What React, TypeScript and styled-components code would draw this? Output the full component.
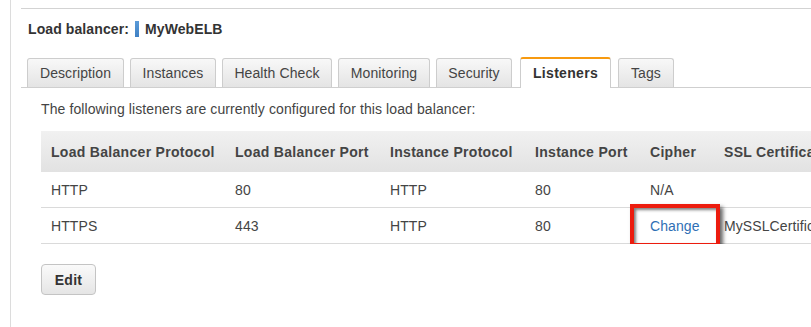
import styled, { createGlobalStyle } from 'styled-components';

const GlobalStyle = createGlobalStyle`
  html, body {
    margin: 0;
    padding: 0;
    background: #fff;
  }
  body {
    font-family: 'Liberation Sans', Arial, sans-serif;
    font-size: 14px;
    letter-spacing: 0.1px;
    color: #444;
  }
`;

const Page = styled.div`
  height: 327px;
  padding-left: 10px;
  overflow: hidden;
`;

const Panel = styled.div`
  height: 100%;
  border-left: 1px solid #dcdcdc;
  padding: 8px 0 0 10px;
  box-sizing: border-box;
`;

const Content = styled.div`
  border-top: 1px solid #d3d3d3;
  padding-top: 12px;
`;

const Heading = styled.h2`
  display: flex;
  align-items: center;
  gap: 6px;
  margin: 0 0 20px 7px;
  font-size: 14px;
  line-height: 16px;
  font-weight: bold;
  letter-spacing: 0.1px;
  color: #333;
`;

const NameMark = styled.span`
  width: 4px;
  height: 16px;
  background: linear-gradient(180deg, #5b9bd8 0%, #3f80c4 100%);
`;

const TabStrip = styled.div`
  display: flex;
  align-items: flex-end;
  gap: 6px;
  padding-left: 6px;
  border-bottom: 1px solid #cfcfcf;
`;

const Tab = styled.div<{ $active?: boolean; $w: number }>`
  box-sizing: border-box;
  width: ${p => p.$w}px;
  height: ${p => (p.$active ? '31px' : '29px')};
  margin: 0 ${p => (p.$active ? '1px' : '0')} ${p => (p.$active ? '-1px' : '0')} ${p => (p.$active ? '2px' : '0')};
  display: flex;
  align-items: center;
  justify-content: center;
  border: 1px solid #cdcdcd;
  border-top: ${p => (p.$active ? '2px solid #f79a10' : '1px solid #cdcdcd')};
  border-bottom: none;
  border-radius: 3px 3px 0 0;
  background: ${p =>
    p.$active ? '#fff' : 'linear-gradient(180deg, #f8f8f8 0%, #e4e4e4 100%)'};
  font-weight: ${p => (p.$active ? 'bold' : 'normal')};
  letter-spacing: ${p => (p.$active ? '0.3px' : '0.1px')};
  color: ${p => (p.$active ? '#333' : '#444')};
  line-height: 16px;
  padding-bottom: ${p => (p.$active ? '1px' : '0')};
`;

const Body = styled.div`
  padding: 13px 0 0 20px;
`;

const Intro = styled.p`
  margin: 0 0 14px;
  line-height: 16px;
  color: #444;
`;

const TableWrap = styled.div`
  overflow: hidden;
`;

const Table = styled.table`
  border-collapse: collapse;
  table-layout: fixed;
  width: 893px;
`;

const HeadCell = styled.th<{ $w: number }>`
  width: ${p => p.$w - 10}px;
  height: 41px;
  padding: 0 0 0 10px;
  text-align: left;
  font-weight: bold;
  letter-spacing: 0.3px;
  color: #444;
  white-space: nowrap;
  overflow: hidden;
  position: relative;
  background: linear-gradient(180deg, #f1f1f1 0%, #e2e2e2 100%);

  & + &::before {
    content: '';
    position: absolute;
    left: 0;
    top: 11px;
    bottom: 10px;
    border-left: 1px solid #cacaca;
  }
`;

const Cell = styled.td`
  height: 35px;
  padding: 0 0 0 10px;
  border-bottom: 1px solid #dadada;
  white-space: nowrap;
  overflow: visible;
  color: #444;
  position: relative;
`;

const Link = styled.a`
  color: #2f6fb5;
  text-decoration: none;
`;

const Callout = styled.span`
  position: absolute;
  left: -10px;
  right: -6px;
  top: -4px;
  bottom: -4px;
  border: 4px solid #ec1c0e;
  box-shadow: 3px 3px 4px rgba(0, 0, 0, 0.6), inset 2px 2px 3px rgba(0, 0, 0, 0.5);
  pointer-events: none;
`;

const EditButton = styled.button`
  margin-top: 20px;
  width: 55px;
  height: 31px;
  border: 1px solid #c4c4c4;
  border-radius: 4px;
  background: linear-gradient(180deg, #fafafa 0%, #e5e5e5 100%);
  font-family: 'Liberation Sans', Arial, sans-serif;
  font-size: 14px;
  font-weight: bold;
  letter-spacing: 0.3px;
  color: #333;
  padding: 0;
`;

const tabs = [
  { label: 'Description', w: 97 },
  { label: 'Instances', w: 86 },
  { label: 'Health Check', w: 110 },
  { label: 'Monitoring', w: 92 },
  { label: 'Security', w: 76 },
  { label: 'Listeners', w: 91 },
  { label: 'Tags', w: 56 },
];

const columns = [
  { label: 'Load Balancer Protocol', w: 184 },
  { label: 'Load Balancer Port', w: 155 },
  { label: 'Instance Protocol', w: 145 },
  { label: 'Instance Port', w: 115 },
  { label: 'Cipher', w: 74 },
  { label: 'SSL Certificate', w: 220 },
];

export default function App() {
  return (
    <>
      <GlobalStyle />
      <Page>
        <Panel>
          <Content>
            <Heading>
              Load balancer:
              <NameMark />
              MyWebELB
            </Heading>
            <TabStrip>
              {tabs.map(t => (
                <Tab key={t.label} $w={t.w} $active={t.label === 'Listeners'}>
                  {t.label}
                </Tab>
              ))}
            </TabStrip>
            <Body>
              <Intro>The following listeners are currently configured for this load balancer:</Intro>
              <TableWrap>
                <Table>
                  <thead>
                    <tr>
                      {columns.map(c => (
                        <HeadCell key={c.label} $w={c.w}>
                          {c.label}
                        </HeadCell>
                      ))}
                    </tr>
                  </thead>
                  <tbody>
                    <tr>
                      <Cell>HTTP</Cell>
                      <Cell>80</Cell>
                      <Cell>HTTP</Cell>
                      <Cell>80</Cell>
                      <Cell>N/A</Cell>
                      <Cell></Cell>
                    </tr>
                    <tr>
                      <Cell>HTTPS</Cell>
                      <Cell>443</Cell>
                      <Cell>HTTP</Cell>
                      <Cell>80</Cell>
                      <Cell>
                        <Link href="#">Change</Link>
                        <Callout />
                      </Cell>
                      <Cell>MySSLCertificate</Cell>
                    </tr>
                  </tbody>
                </Table>
              </TableWrap>
              <EditButton>Edit</EditButton>
            </Body>
          </Content>
        </Panel>
      </Page>
    </>
  );
}
